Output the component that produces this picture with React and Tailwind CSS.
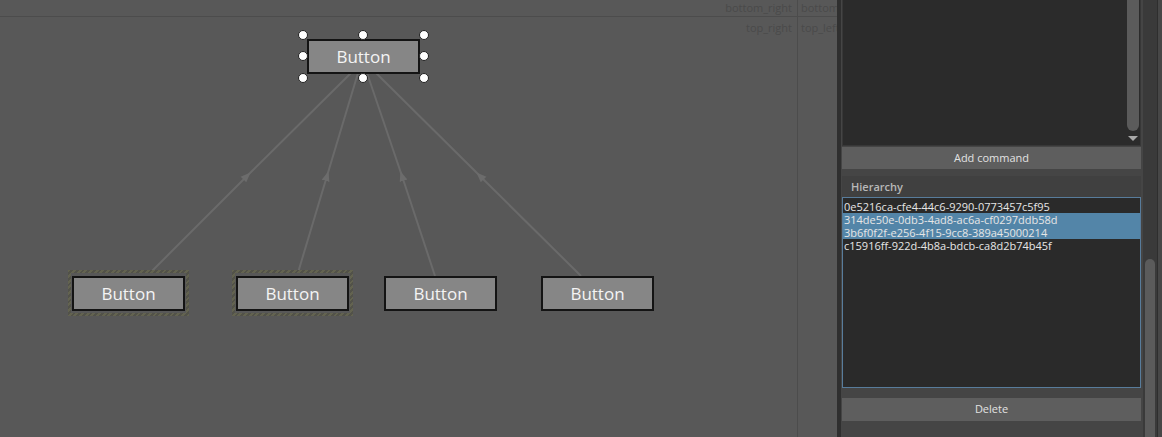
const font = { fontFamily: '"Open Sans", "Noto Sans", sans-serif' };

const edges = [
  [147, 276, 247, 176, 351, 73],
  [297, 276, 327, 176, 358, 73],
  [435, 276, 402, 176, 367, 73],
  [581, 276, 480, 176, 376, 73],
];

const handles = [
  [303, 35], [363, 35], [424, 35],
  [303, 56], [424, 56],
  [303, 78], [363, 78], [424, 78],
];

function NodeButton() {
  return (
    <div className="flex h-[35px] w-[113px] items-center justify-center border-2 border-[#141414] bg-[#868686] text-[17px] text-[#f4f4f4]">
      Button
    </div>
  );
}

function Diagram() {
  return (
    <div className="absolute inset-0">
      <svg className="absolute inset-0" width="838" height="437">
        <defs>
          <marker id="arr" viewBox="0 0 10 10" refX="5" refY="5" markerWidth="5" markerHeight="5" orient="auto">
            <path d="M0 1 L10 5 L0 9 z" fill="#6c6c6c" />
          </marker>
        </defs>
        {edges.map((e, i) => (
          <polyline
            key={i}
            points={`${e[0]},${e[1]} ${e[2]},${e[3]} ${e[4]},${e[5]}`}
            fill="none"
            stroke="#6a6a6a"
            strokeWidth="2"
            markerMid="url(#arr)"
          />
        ))}
      </svg>

      {/* selected node */}
      <div className="absolute left-[307px] top-[39px]">
        <NodeButton />
      </div>
      {handles.map(([x, y], i) => (
        <div
          key={i}
          className="absolute h-[10px] w-[10px] -translate-x-1/2 -translate-y-1/2 rounded-full border border-[#222] bg-white"
          style={{ left: x, top: y }}
        />
      ))}

      {/* children */}
      <div className="absolute left-[68px] top-[270px] bg-[repeating-linear-gradient(135deg,#636350_0_2px,#525249_2px_4px)] p-[3px]">
        <div className="bg-[#585858] px-[1px] pb-[2px] pt-[3px]">
          <NodeButton />
        </div>
      </div>
      <div className="absolute left-[232px] top-[270px] bg-[repeating-linear-gradient(135deg,#636350_0_2px,#525249_2px_4px)] p-[3px]">
        <div className="bg-[#585858] px-[1px] pb-[2px] pt-[3px]">
          <NodeButton />
        </div>
      </div>
      <div className="absolute left-[384px] top-[276px]">
        <NodeButton />
      </div>
      <div className="absolute left-[541px] top-[276px]">
        <NodeButton />
      </div>
    </div>
  );
}

const ids = [
  ['0e5216ca-cfe4-44c6-9290-0773457c5f95', false],
  ['314de50e-0db3-4ad8-ac6a-cf0297ddb58d', true],
  ['3b6f0f2f-e256-4f15-9cc8-389a45000214', true],
  ['c15916ff-922d-4b8a-bdcb-ca8d2b74b45f', false],
];

export default function App() {
  return (
    <div className="flex h-[437px] w-[1162px] overflow-hidden bg-[#444]" style={font}>
      {/* canvas */}
      <div className="relative flex h-full w-[837px] shrink-0 bg-[#585858] text-[11px] text-[#4a4a4a]">
        <div className="flex h-full w-[798px] flex-col border-r border-[#4c4c4c]">
          <div className="h-[17px] border-b border-[#4c4c4c] pr-[5px] text-right leading-[15px]">bottom_right</div>
          <div className="pr-[5px] pt-[3px] text-right leading-[16px]">top_right</div>
        </div>
        <div className="flex flex-1 flex-col overflow-hidden whitespace-nowrap">
          <div className="h-[17px] border-b border-[#4c4c4c] pl-[3px] leading-[15px]">bottom_right</div>
          <div className="pl-[3px] pt-[3px] leading-[16px]">top_left</div>
        </div>
        <Diagram />
      </div>

      {/* panel */}
      <div className="flex h-full w-[306px] shrink-0 flex-col border-l-[4px] border-[#2f2f2f] bg-[#454545] pl-[1px] pr-[2px] text-[11px]">
        <div className="flex h-[146px] justify-end border border-t-0 border-[#383838] bg-[#2b2b2b]">
          <div className="mr-[1px] flex w-[12px] flex-col">
            <div className="flex-1 rounded-b-full bg-[#5b5b5b]" />
            <div className="flex h-[14px] items-center justify-center">
              <div className="h-0 w-0 border-x-[5px] border-t-[5px] border-x-transparent border-t-[#a8a8a8]" />
            </div>
          </div>
        </div>
        <div className="mt-[1px] flex h-[22px] items-center justify-center bg-[#5e5e5e] text-[#e2e2e2]">
          Add command
        </div>
        <div className="mt-[7px] flex h-[21px] items-center bg-[#404040] pl-[9px] pt-[1px] font-semibold text-[#b8b8b8]">
          Hierarchy
        </div>
        <div className="h-[191px] border border-[#587c9b] bg-[#2a2a2a] pt-[2px] text-[11px] text-[#e6e6e6]">
          {ids.map(([id, sel]) => (
            <div
              key={id}
              className={sel ? 'h-[13px] bg-[#5385a8] pl-[1px] leading-[13px]' : 'h-[13px] pl-[1px] leading-[13px]'}
            >
              {id}
            </div>
          ))}
        </div>
        <div className="mt-[10px] flex h-[23px] items-center justify-center bg-[#5e5e5e] text-[#e2e2e2]">
          Delete
        </div>
      </div>

      {/* outer scrollbar */}
      <div className="flex h-full w-[14px] shrink-0 flex-col bg-[#3a3a3a]">
        <div className="h-[259px]" />
        <div className="mx-[2px] flex-1 rounded-t-full bg-[#5b5b5b]" />
      </div>
      <div className="h-full flex-1 border-l border-[#2e2e2e] bg-[#474747]" />
    </div>
  );
}
